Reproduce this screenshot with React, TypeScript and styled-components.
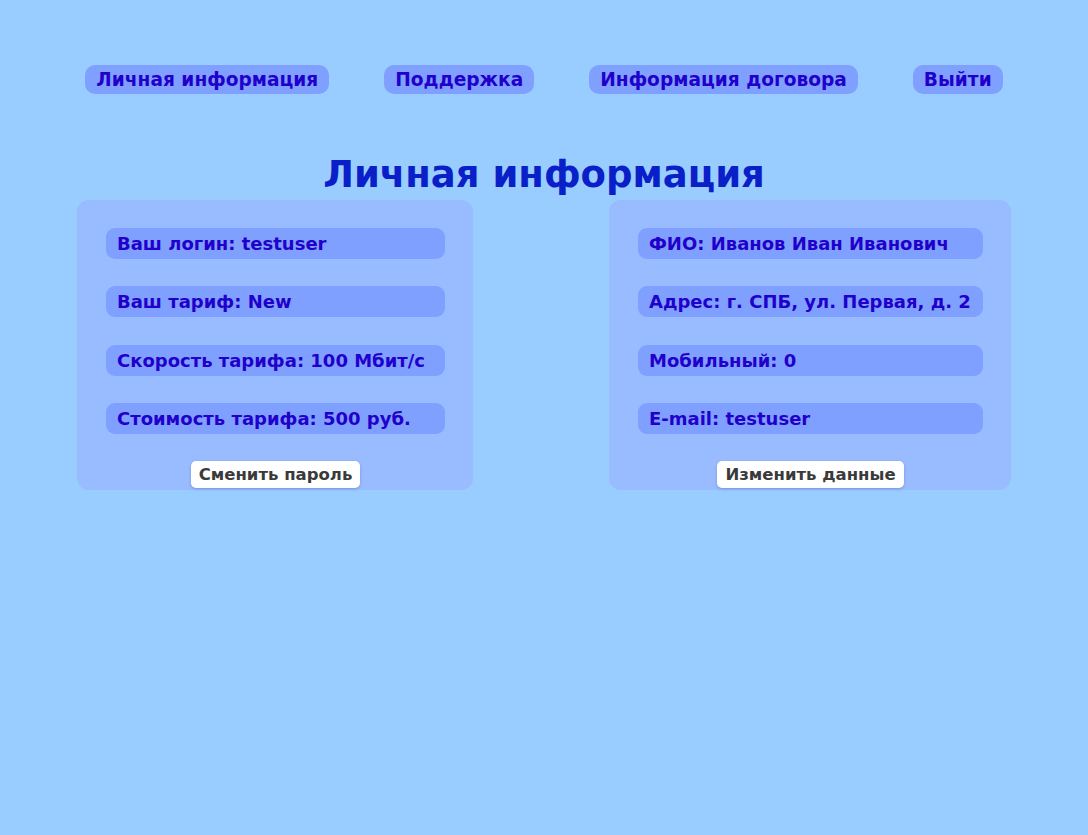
import React from "react";
import styled, { createGlobalStyle } from "styled-components";

const FONT = `"DejaVu Sans", "Liberation Sans", Arial, sans-serif`;

const Global = createGlobalStyle`
  html, body {
    margin: 0;
    padding: 0;
    background: #99ccff;
    font-family: ${FONT};
  }
  body { min-height: 835px; }
`;

const Page = styled.div`
  display: flex;
  flex-direction: column;
  align-items: center;
  padding-top: 65px;
`;

const Nav = styled.nav`
  display: flex;
  gap: 55px;
  justify-content: center;
`;

const NavButton = styled.button`
  height: 29px;
  padding: 0 11px;
  border: none;
  border-radius: 10px;
  background: #80a0ff;
  color: #2200cc;
  font-family: ${FONT};
  font-weight: bold;
  font-size: 18.6px;
  cursor: pointer;
`;

const Title = styled.h1`
  margin: 56px 0 0;
  font-size: 37px;
  line-height: 50px;
  font-weight: bold;
  color: #0a1fc8;
`;

const Panels = styled.div`
  width: 934px;
  display: flex;
  justify-content: space-between;
  align-items: flex-start;
`;

const Panel = styled.section<{ $minWidth: number }>`
  min-width: ${(p) => p.$minWidth}px;
  box-sizing: border-box;
  background: #99bbff;
  border-radius: 12px;
  padding: 28px 28px 2px 29px;
  display: flex;
  flex-direction: column;
  align-items: center;
`;

const Rows = styled.div`
  display: flex;
  flex-direction: column;
  align-self: stretch;
`;

const Row = styled.div`
  height: 31px;
  margin-bottom: 27.3px;
  display: flex;
  align-items: center;
  padding: 0 12px 0 11px;
  border-radius: 9px;
  background: #80a0ff;
  color: #2200cc;
  font-weight: bold;
  font-size: 18px;
  white-space: nowrap;
`;

const ActionButton = styled.button`
  height: 27px;
  padding: 0 8px;
  border: none;
  border-radius: 5px;
  background: #ffffff;
  color: #3a3a3a;
  font-family: ${FONT};
  font-weight: bold;
  font-size: 16.5px;
  box-shadow: 0 1px 3px rgba(60, 80, 140, 0.35);
  cursor: pointer;
`;

const left = [
  "Ваш логин: testuser",
  "Ваш тариф: New",
  "Скорость тарифа: 100 Мбит/с",
  "Стоимость тарифа: 500 руб.",
];
const right = [
  "ФИО: Иванов Иван Иванович",
  "Адрес: г. СПБ, ул. Первая, д. 2",
  "Мобильный: 0",
  "E-mail: testuser",
];

export default function App() {
  return (
    <>
      <Global />
      <Page>
        <Nav>
          <NavButton>Личная информация</NavButton>
          <NavButton>Поддержка</NavButton>
          <NavButton>Информация договора</NavButton>
          <NavButton>Выйти</NavButton>
        </Nav>
        <Title>Личная информация</Title>
        <Panels>
          <Panel $minWidth={396}>
            <Rows>
              {left.map((t) => (
                <Row key={t}>{t}</Row>
              ))}
            </Rows>
            <ActionButton>Сменить пароль</ActionButton>
          </Panel>
          <Panel $minWidth={402}>
            <Rows>
              {right.map((t) => (
                <Row key={t}>{t}</Row>
              ))}
            </Rows>
            <ActionButton>Изменить данные</ActionButton>
          </Panel>
        </Panels>
      </Page>
    </>
  );
}
